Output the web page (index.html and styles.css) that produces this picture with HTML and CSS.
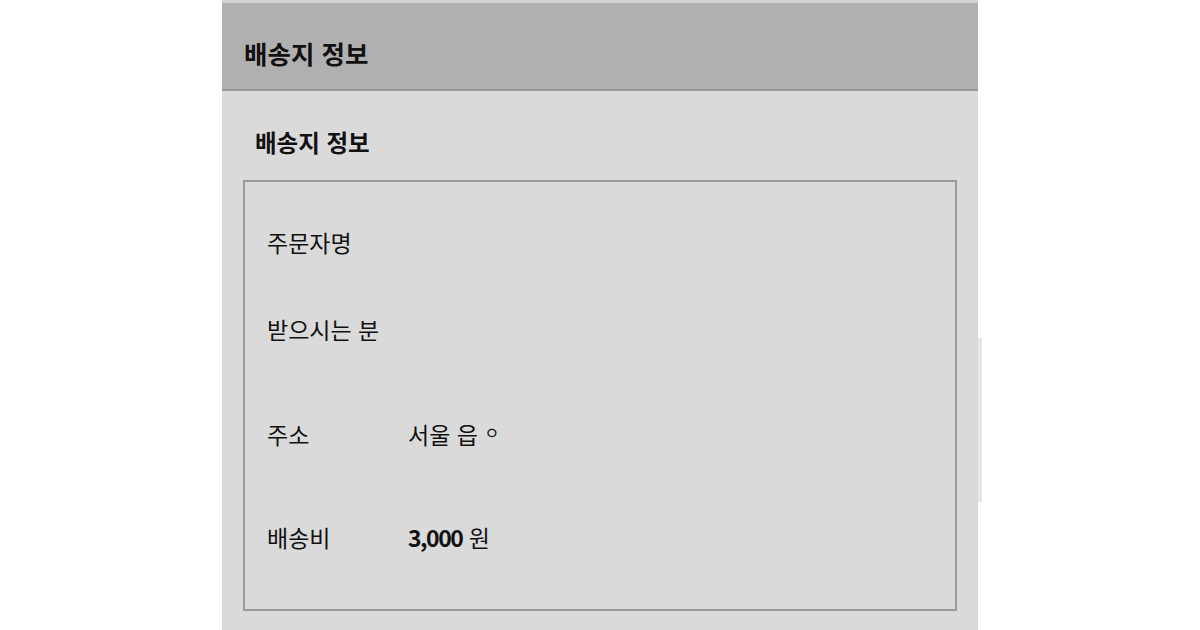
FILE: index.html
```html
<!DOCTYPE html>
<html lang="ko">
<head>
    <meta charset="UTF-8">
    <meta name="viewport" content="width=device-width, initial-scale=1.0">
    <title>배송지 정보</title>
    <link rel="stylesheet" href="styles.css">
</head>
<body>
    <div id="wrap">
        <div id="panel">
            <!-- header -->
            <div id="header">
                <h2 class="title">배송지 정보</h2>
            </div>

            <div id="content">
                <h3 class="subtitle">배송지 정보</h3>

                <div class="info_box">
                    <div class="row row1">
                        <span class="label">주문자명</span>
                        <span class="value"></span>
                    </div>
                    <div class="row row2">
                        <span class="label">받으시는 분</span>
                        <span class="value"></span>
                    </div>
                    <div class="row row3">
                        <span class="label">주소</span>
                        <span class="value">서울 읍 <span class="small">ㅇ</span></span>
                    </div>
                    <div class="row row4">
                        <span class="label">배송비</span>
                        <span class="value"><b>3,000</b> 원</span>
                    </div>
                </div>
            </div>
        </div>
        <div id="scroll"></div>
    </div>
</body>
</html>
```

FILE: styles.css
```css
* {
    box-sizing: border-box;
    margin: 0;
}

body {
    background-color: white;
    font-family: "Noto Sans CJK KR", "Noto Sans", sans-serif;
    color: #111;
}

#wrap {
    display: flex;
    height: 630px;
    padding-left: 222px;
}

#panel {
    width: 756px;
    height: 630px;
    background-color: #dadada;
}

#header {
    height: 91px;
    background-color: #b0b0b0;
    border-top: 3px solid #d2d2d2;
    border-bottom: 2px solid #999;
    display: flex;
    align-items: center;
    padding: 14px 0 0 22px;
}

.title {
    font-size: 25.5px;
    font-weight: bold;
    line-height: 30px;
}

#content {
    padding-top: 31px;
}

.subtitle {
    font-size: 23.5px;
    font-weight: bold;
    line-height: 40px;
    height: 40px;
    padding-left: 33px;
}

.info_box {
    margin: 18px 21px 0 21px;
    height: 431px;
    border: 2px solid #999;
    padding: 40px 0 0 22px;
}

.row {
    display: flex;
    height: 40px;
    align-items: center;
    font-size: 23px;
}

.row2 { margin-top: 47px; }
.row3 { margin-top: 65px; }
.row4 { margin-top: 63px; }

.label {
    width: 141px;
}

.value b {
    font-weight: bold;
    letter-spacing: -1.5px;
}

.small {
    font-size: 16px;
    vertical-align: 5px;
}

#scroll {
    width: 4px;
    height: 164px;
    margin-top: 338px;
    background-color: #e6e6e6;
}
```
